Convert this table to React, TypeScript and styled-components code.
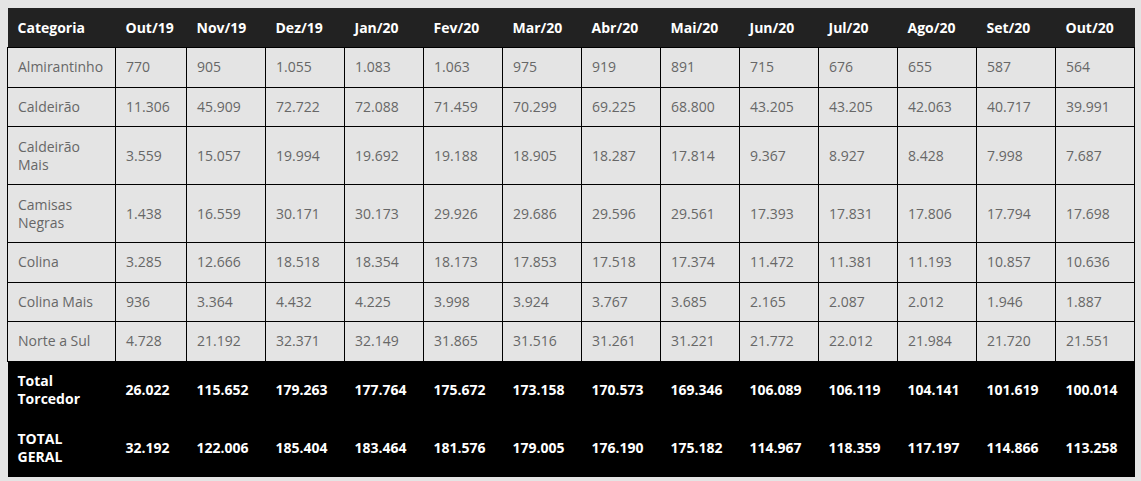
import * as React from "react";
import styled, { createGlobalStyle } from "styled-components";

const GlobalStyle = createGlobalStyle`
  html, body {
    margin: 0;
    background: #e4e4e4;
  }
  body {
    padding: 8px 7px;
    font-family: "Open Sans", "Liberation Sans", sans-serif;
  }
`;

const Table = styled.table`
  width: 1127px;
  table-layout: fixed;
  border-collapse: collapse;
  font-size: 14px;
  line-height: 18px;
`;

const HeadCell = styled.th`
  background: #222222;
  color: #ffffff;
  font-weight: 700;
  text-align: left;
  height: 39px;
  padding: 0 10px;
  border-bottom: 1px solid #000;
`;

const Row = styled.tr<{ $tall?: boolean }>`
  height: ${(p) => (p.$tall ? "58px" : "39.5px")};
`;

const Cell = styled.td`
  background: #e4e4e4;
  color: #676767;
  border: 1px solid #000;
  padding: 0 10px;
  vertical-align: middle;
`;

const TotalRow = styled.tr`
  height: 58px;
`;

const TotalCell = styled.td`
  background: #000;
  color: #fff;
  font-weight: 700;
  padding: 0 10px;
  vertical-align: middle;
`;

const months = [
  "Out/19", "Nov/19", "Dez/19", "Jan/20", "Fev/20", "Mar/20", "Abr/20",
  "Mai/20", "Jun/20", "Jul/20", "Ago/20", "Set/20", "Out/20",
];

const rows: { name: string; tall?: boolean; values: string[] }[] = [
  { name: "Almirantinho", values: ["770", "905", "1.055", "1.083", "1.063", "975", "919", "891", "715", "676", "655", "587", "564"] },
  { name: "Caldeirão", values: ["11.306", "45.909", "72.722", "72.088", "71.459", "70.299", "69.225", "68.800", "43.205", "43.205", "42.063", "40.717", "39.991"] },
  { name: "Caldeirão Mais", tall: true, values: ["3.559", "15.057", "19.994", "19.692", "19.188", "18.905", "18.287", "17.814", "9.367", "8.927", "8.428", "7.998", "7.687"] },
  { name: "Camisas Negras", tall: true, values: ["1.438", "16.559", "30.171", "30.173", "29.926", "29.686", "29.596", "29.561", "17.393", "17.831", "17.806", "17.794", "17.698"] },
  { name: "Colina", values: ["3.285", "12.666", "18.518", "18.354", "18.173", "17.853", "17.518", "17.374", "11.472", "11.381", "11.193", "10.857", "10.636"] },
  { name: "Colina Mais", values: ["936", "3.364", "4.432", "4.225", "3.998", "3.924", "3.767", "3.685", "2.165", "2.087", "2.012", "1.946", "1.887"] },
  { name: "Norte a Sul", values: ["4.728", "21.192", "32.371", "32.149", "31.865", "31.516", "31.261", "31.221", "21.772", "22.012", "21.984", "21.720", "21.551"] },
];

const totals = [
  { name: "Total Torcedor", values: ["26.022", "115.652", "179.263", "177.764", "175.672", "173.158", "170.573", "169.346", "106.089", "106.119", "104.141", "101.619", "100.014"] },
  { name: "TOTAL GERAL", values: ["32.192", "122.006", "185.404", "183.464", "181.576", "179.005", "176.190", "175.182", "114.967", "118.359", "117.197", "114.866", "113.258"] },
];

export default function App() {
  return (
    <>
      <GlobalStyle />
      <Table>
        <colgroup>
          <col style={{ width: 108 }} />
          <col style={{ width: 71 }} />
          {months.slice(1).map((m) => (
            <col key={m} style={{ width: 79 }} />
          ))}
        </colgroup>
        <thead>
          <tr>
            <HeadCell>Categoria</HeadCell>
            {months.map((m) => (
              <HeadCell key={m}>{m}</HeadCell>
            ))}
          </tr>
        </thead>
        <tbody>
          {rows.map((r) => (
            <Row key={r.name} $tall={r.tall}>
              <Cell>{r.name}</Cell>
              {r.values.map((v, i) => (
                <Cell key={i}>{v}</Cell>
              ))}
            </Row>
          ))}
          {totals.map((r) => (
            <TotalRow key={r.name}>
              <TotalCell>{r.name}</TotalCell>
              {r.values.map((v, i) => (
                <TotalCell key={i}>{v}</TotalCell>
              ))}
            </TotalRow>
          ))}
        </tbody>
      </Table>
    </>
  );
}
